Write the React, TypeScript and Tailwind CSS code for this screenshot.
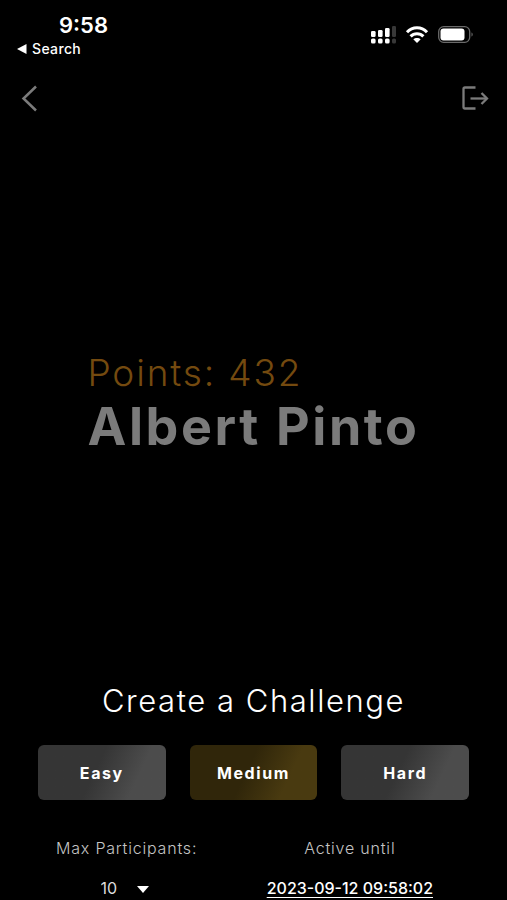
import { useState } from "react";

const levels = ["Easy", "Medium", "Hard"];

function StatusBar() {
  return (
    <div className="flex h-16 items-start justify-between pt-[13px] pr-[34px] pl-4 text-white">
      <div>
        <div className="pl-[43px] text-[22px] leading-6 font-semibold">9:58</div>
        <a href="#search" className="flex items-center gap-1 text-sm leading-6 font-medium tracking-wide">
          <svg className="h-3 w-3" viewBox="0 0 12 12" fill="currentColor">
            <path d="M1 6 10.5 1v10z" />
          </svg>
          Search
        </a>
      </div>
      <div className="flex items-center gap-2 pt-3">
        {/* Dual SIM signal */}
        <svg className="h-5 w-7" viewBox="0 0 28 20" fill="currentColor">
          <rect x="2" y="6" width="4.6" height="6" rx="1.3" />
          <rect x="9" y="5" width="4.6" height="7" rx="1.3" />
          <rect x="16" y="3" width="4.6" height="9" rx="1.3" />
          <rect x="23" y="1" width="4" height="11" rx="1.3" opacity="0.22" />
          <rect x="2" y="13.4" width="4.6" height="5.1" rx="1.6" />
          <rect x="9" y="13.4" width="4.6" height="5.1" rx="1.6" />
          <rect x="16" y="13.4" width="4.6" height="5.1" rx="1.6" />
          <rect x="23" y="13.4" width="4" height="5.1" rx="1.6" opacity="0.22" />
        </svg>
        {/* Wi-Fi */}
        <svg className="h-5 w-6" viewBox="0 0 24 20" fill="none" stroke="currentColor" strokeWidth="3">
          <path d="M2 7.2C7.5 1.3 16.5 1.3 22 7.2" />
          <path d="M5.6 11.4c3.5-3.7 9.3-3.7 12.8 0" />
          <path d="M12 18 8.3 14.3c2-1.900 5.4-1.900 7.4 0z" fill="currentColor" stroke="none" />
        </svg>
        {/* Battery */}
        <svg className="h-5 w-9" viewBox="0 0 36 20">
          <rect x="1.7" y="1.7" width="31" height="15.6" rx="5" fill="none" stroke="#6a6a6a" strokeWidth="1.3" />
          <rect x="3.5" y="3.5" width="24" height="12" rx="3" fill="currentColor" />
          <path d="M34.5 7.5c1.6.8 1.6 3.2 0 4z" fill="#6a6a6a" />
        </svg>
      </div>
    </div>
  );
}

function NavBar() {
  return (
    <nav className="flex h-[68px] items-center justify-between px-4 text-[#7b7b7b]">
      <button type="button" aria-label="Back">
        <svg className="h-7 w-7" viewBox="0 0 28 28" fill="none" stroke="currentColor" strokeWidth="2.5">
          <path d="M20 2.5 7.5 14.5 20 26.5" />
        </svg>
      </button>
      <button type="button" aria-label="Log out">
        <svg className="h-7 w-8" viewBox="0 0 32 28" fill="none" stroke="currentColor" strokeWidth="2.3">
          <path d="M16.5 3.5H6A1.5 1.5 0 0 0 4.5 5v18A1.5 1.5 0 0 0 6 24.5h10.5" />
          <path d="M11.5 14.500H28" />
          <path d="M22.5 9 28 14.500 22.500 20" />
        </svg>
      </button>
    </nav>
  );
}

export default function App() {
  const [level, setLevel] = useState("Medium");
  const [participants, setParticipants] = useState("10");

  return (
    <div className="flex min-h-screen flex-col bg-black font-['Inter','Liberation_Sans',sans-serif]">
      <StatusBar />
      <NavBar />

      <section className="flex flex-1 items-center justify-center pb-2">
        <div>
          <p className="text-[37px] leading-12 font-light tracking-wider text-[#744a0f]">Points: 432</p>
          <h1 className="text-[52px] leading-15 font-bold tracking-wider text-[#7b7b7b]">Albert Pinto</h1>
        </div>
      </section>

      <main className="px-[38px] text-white">
        <h2 className="text-center text-[31px] leading-10 font-light tracking-wider">Create a Challenge</h2>

        <div className="mt-6 grid grid-cols-3 gap-6">
          {levels.map((item) => (
            <button
              key={item}
              type="button"
              aria-pressed={item === level}
              onClick={() => setLevel(item)}
              className={`h-[55px] rounded-md text-base font-bold tracking-widest ${
                item === level
                  ? "bg-linear-115 from-[#30260a] from-45% to-[#493a10] to-75%"
                  : "bg-linear-115 from-[#353535] from-45% to-[#4c4c4c] to-75%"
              }`}
            >
              {item}
            </button>
          ))}
        </div>

        <div className="mt-9 flex justify-between pr-9 pl-[18px]">
          <div className="flex flex-col items-center gap-4">
            <label htmlFor="participants" className="text-base leading-6 font-light tracking-wider text-[#c4c4c4]">
              Max Participants:
            </label>
            <div className="relative">
              <select
                id="participants"
                value={participants}
                onChange={(e) => setParticipants(e.target.value)}
                className="block w-[52px] appearance-none bg-black text-base leading-6 text-[#dcdcdc]"
              >
                <option>5</option>
                <option>10</option>
                <option>20</option>
              </select>
              <svg
                className="pointer-events-none absolute top-2 right-1 h-3 w-3"
                viewBox="0 0 12 12"
                fill="currentColor"
              >
                <path d="M0 2h12L6 9z" />
              </svg>
            </div>
          </div>
          <div className="flex flex-col items-center gap-4">
            <span className="text-base leading-6 font-light tracking-wider text-[#c4c4c4]">Active until</span>
            <button type="button" className="text-base leading-6 font-medium underline underline-offset-3">
              2023-09-12 09:58:02
            </button>
          </div>
        </div>
      </main>
    </div>
  );
}
